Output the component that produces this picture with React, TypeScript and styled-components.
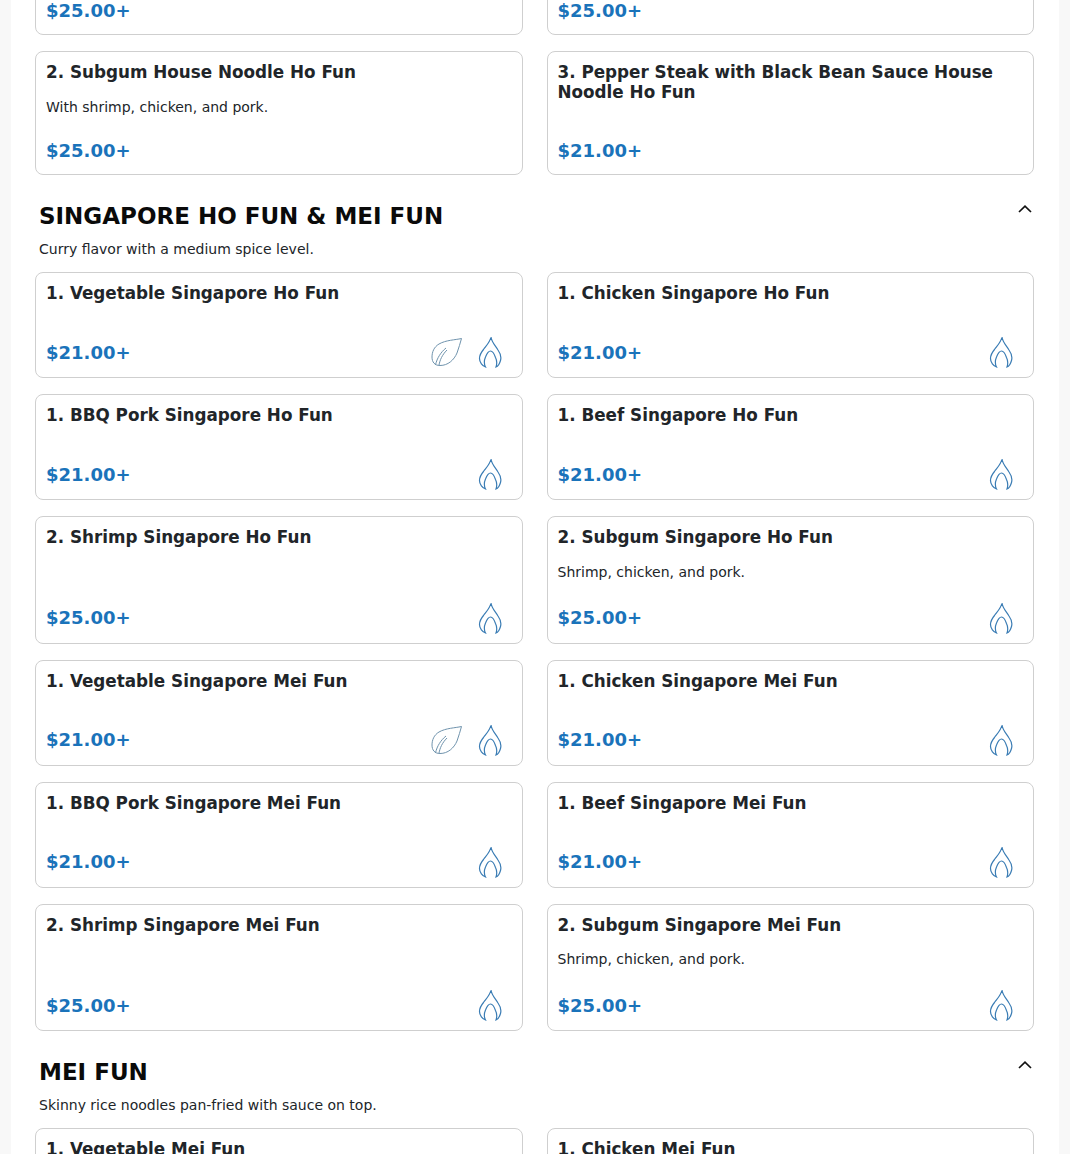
import styled, { createGlobalStyle } from 'styled-components';

const GlobalStyle = createGlobalStyle`
  html, body {
    margin: 0;
    height: 100%;
    overflow: hidden;
    background: #f8f8f8;
    font-family: "DejaVu Sans", sans-serif;
    color: #212529;
  }
`;

type Dish = {
  name?: string;
  description?: string;
  price: string;
  veg?: boolean;
  spicy?: boolean;
};

type Section = {
  title?: string;
  subtitle?: string;
  dishes: Dish[];
};

const sections: Section[] = [
  {
    dishes: [
      { price: '$25.00+' },
      { price: '$25.00+' },
      {
        name: '2. Subgum House Noodle Ho Fun',
        description: 'With shrimp, chicken, and pork.',
        price: '$25.00+',
      },
      {
        name: '3. Pepper Steak with Black Bean Sauce House Noodle Ho Fun',
        price: '$21.00+',
      },
    ],
  },
  {
    title: 'SINGAPORE HO FUN & MEI FUN',
    subtitle: 'Curry flavor with a medium spice level.',
    dishes: [
      { name: '1. Vegetable Singapore Ho Fun', price: '$21.00+', veg: true, spicy: true },
      { name: '1. Chicken Singapore Ho Fun', price: '$21.00+', spicy: true },
      { name: '1. BBQ Pork Singapore Ho Fun', price: '$21.00+', spicy: true },
      { name: '1. Beef Singapore Ho Fun', price: '$21.00+', spicy: true },
      { name: '2. Shrimp Singapore Ho Fun', price: '$25.00+', spicy: true },
      {
        name: '2. Subgum Singapore Ho Fun',
        description: 'Shrimp, chicken, and pork.',
        price: '$25.00+',
        spicy: true,
      },
      { name: '1. Vegetable Singapore Mei Fun', price: '$21.00+', veg: true, spicy: true },
      { name: '1. Chicken Singapore Mei Fun', price: '$21.00+', spicy: true },
      { name: '1. BBQ Pork Singapore Mei Fun', price: '$21.00+', spicy: true },
      { name: '1. Beef Singapore Mei Fun', price: '$21.00+', spicy: true },
      { name: '2. Shrimp Singapore Mei Fun', price: '$25.00+', spicy: true },
      {
        name: '2. Subgum Singapore Mei Fun',
        description: 'Shrimp, chicken, and pork.',
        price: '$25.00+',
        spicy: true,
      },
    ],
  },
  {
    title: 'MEI FUN',
    subtitle: 'Skinny rice noodles pan-fried with sauce on top.',
    dishes: [
      { name: '1. Vegetable Mei Fun', price: '$21.00+' },
      { name: '1. Chicken Mei Fun', price: '$21.00+' },
    ],
  },
];

const LeafIcon = () => (
  <svg width="32" height="30" viewBox="0 0 32 30" fill="none" stroke="#6f93ad" strokeWidth="1">
    <path d="M30.5 1.5 C24 3 15 3 8 7 C3 10 1 15 1 20 C1 25 3.5 28.5 9 28.5 C17 28.5 23 23 26 16 C28 11 29 6 30.5 1.5 Z" />
    <path d="M4.5 28 C6 21 10 15 15 11" />
    <path d="M8 28 C9 23 11 18 16 13" />
  </svg>
);

const FlameIcon = () => (
  <svg width="24" height="32" viewBox="0 0 24 32" fill="none" stroke="#3a7cb4" strokeWidth="1.2">
    <path d="M13 1 C13.5 6 17 9 20 14 C22.5 17.5 23.5 21 22.5 24.5 C21.5 28 19.5 30.5 18 31 C19 28 19 24.5 17.5 21.5 C16.5 18.5 14.5 15 12.5 15 C10.5 15 8.5 18.5 7.5 21 C6 24.5 6 28 7.5 31 C4.5 30 1.5 26.5 1.5 22.5 C1.5 19 3 16.5 5.5 13.5 C8.5 9.5 12 6 13 1 Z" />
  </svg>
);

const ChevronIcon = () => (
  <svg width="14" height="8" viewBox="0 0 14 8" fill="none" stroke="#111" strokeWidth="1.7">
    <path d="M1 7 L7 1.2 L13 7" />
  </svg>
);

const App = () => (
  <>
    <GlobalStyle />
    <S.Panel>
      {sections.map((section, index) => (
        <S.Section key={section.title ?? index}>
          {section.title && (
            <S.SectionHead>
              <S.SectionTitle>{section.title}</S.SectionTitle>
              <S.SectionSubtitle>{section.subtitle}</S.SectionSubtitle>
              <S.Toggle>
                <ChevronIcon />
              </S.Toggle>
            </S.SectionHead>
          )}
          <S.Grid>
            {section.dishes.map((dish, dishIndex) => (
              <S.Card key={`${dish.name ?? dish.price}${dishIndex}`}>
                {dish.name && <S.Name>{dish.name}</S.Name>}
                {dish.description && <S.Description>{dish.description}</S.Description>}
                <S.Footer>
                  <S.Price>{dish.price}</S.Price>
                  {(dish.veg || dish.spicy) && (
                    <S.Icons>
                      {dish.veg && <LeafIcon />}
                      {dish.spicy && <FlameIcon />}
                    </S.Icons>
                  )}
                </S.Footer>
              </S.Card>
            ))}
          </S.Grid>
        </S.Section>
      ))}
    </S.Panel>
  </>
);

export default App;

const S = {
  Panel: styled.main`
    box-sizing: border-box;
    width: 1048px;
    height: 1225px;
    margin: -70.7px 0 0 11px;
    padding: 0 25px 0 24px;
    background: #fff;
    overflow: hidden;
  `,
  Section: styled.section`
    margin-bottom: 22.3px;
  `,
  SectionHead: styled.header`
    position: relative;
    padding: 0 4px;
    margin-bottom: 13.65px;
  `,
  SectionTitle: styled.h2`
    margin: 0;
    font-size: 23px;
    line-height: 36px;
    font-weight: 700;
    color: #0a0a0a;
  `,
  SectionSubtitle: styled.p`
    margin: 5px 0 0;
    font-size: 14px;
    line-height: 20px;
    color: #212529;
  `,
  Toggle: styled.span`
    position: absolute;
    top: 7px;
    right: 2px;
    display: flex;
  `,
  Grid: styled.div`
    display: grid;
    grid-template-columns: 1fr 1fr;
    column-gap: 24px;
    row-gap: 16px;
  `,
  Card: styled.article`
    box-sizing: border-box;
    display: flex;
    flex-direction: column;
    min-height: 106px;
    padding: 10px;
    border: 1px solid #cfcfcf;
    border-radius: 8px;
    background: #fff;
  `,
  Name: styled.h3`
    margin: 0 0 14.2px;
    font-size: 16.8px;
    line-height: 20px;
    font-weight: 700;
    color: #212529;
  `,
  Description: styled.p`
    margin: 0 0 19.8px;
    font-size: 14px;
    line-height: 21.5px;
    color: #212529;
  `,
  Footer: styled.div`
    display: flex;
    align-items: center;
    justify-content: space-between;
    margin-top: auto;
  `,
  Price: styled.span`
    padding-top: 0.6px;
    font-size: 18px;
    line-height: 26px;
    font-weight: 700;
    color: #1a73ba;
  `,
  Icons: styled.div`
    display: flex;
    align-items: center;
    gap: 15px;
    height: 30px;
    margin-right: 9.7px;
  `,
};
